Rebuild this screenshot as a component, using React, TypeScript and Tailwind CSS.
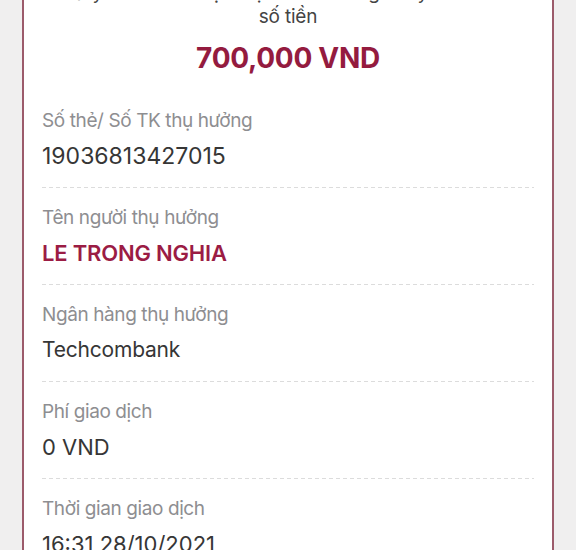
import React from "react";

const rows = [
  { label: "Số thẻ/ Số TK thụ hưởng", value: "19036813427015", valueClass: "text-[23px]" },
  { label: "Tên người thụ hưởng", value: "LE TRONG NGHIA", accent: true },
  { label: "Ngân hàng thụ hưởng", value: "Techcombank", valueClass: "text-[21px] tracking-[-0.2px]" },
  { label: "Phí giao dịch", value: "0 VND", valueClass: "text-[22px]" },
  { label: "Thời gian giao dịch", value: "16:31 28/10/2021", valueClass: "text-[22px]", last: true },
];

type Row = { label: string; value: string; valueClass?: string; accent?: boolean; last?: boolean };

const DetailRow = ({ label, value, valueClass, accent, last }: Row) => (
  <div className="flex flex-col">
    <div className="pt-[17px] pb-[17px] flex flex-col gap-[8px]">
      <div className="text-[19px] leading-[26px] text-[#8e8e91] tracking-[-0.4px]">{label}</div>
      <div
        className={
          accent
            ? "text-[22px] leading-[28px] font-semibold text-[#9b1c44] tracking-[-0.2px]"
            : `leading-[28px] text-[#363636] ${valueClass}`
        }
      >
        {value}
      </div>
    </div>
    {!last && (
      <div className="h-px bg-[repeating-linear-gradient(to_right,#dcdcdc_0_4px,transparent_4px_7px)]" />
    )}
  </div>
);

export default function App() {
  return (
    <div className="w-[576px] h-[550px] overflow-hidden bg-[#f0efef] px-[22px] font-['Inter','Liberation_Sans',sans-serif]">
      <div className="h-full bg-white border-x-2 border-[#9c5b6b] flex flex-col">
        {/* amount */}
        <div className="flex flex-col items-center pb-[16px]">
          <div className="mt-[-19px] text-center text-[19px] leading-[24px] text-[#444444] tracking-[-0.2px] px-6">
            Quý khách đã thực hiện thành công chuyển khoản
            <br />
            số tiền
          </div>
          <div className="mt-[12px] text-[28px] leading-[34px] font-bold text-[#941b3f] tracking-[-0.3px]">
            700,000 VND
          </div>
        </div>
        <div className="h-[3px] bg-[#ececec]" />

        {/* details */}
        <div className="px-[18px] flex flex-col">
          {rows.map((r) => (
            <DetailRow key={r.label} {...r} />
          ))}
        </div>
      </div>
    </div>
  );
}
